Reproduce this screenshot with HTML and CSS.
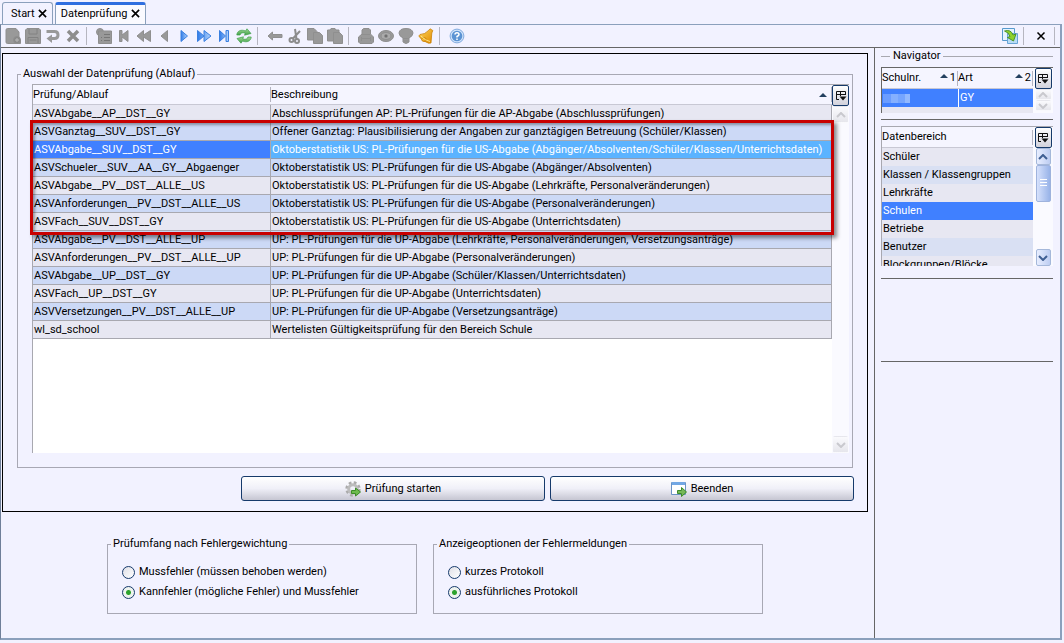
FILE: index.html
```html
<!DOCTYPE html>
<html lang="de">
<head>
<meta charset="utf-8">
<title>Datenprüfung</title>
<link rel="stylesheet" href="styles.css">
</head>
<body>
<svg class="defs" aria-hidden="true">
  <defs>
    <linearGradient id="blue" x1="0" y1="0" x2="1" y2="0"><stop offset="0" stop-color="#2f7be8"/><stop offset="1" stop-color="#b4d4fc"/></linearGradient>
    <linearGradient id="gold" x1="0" y1="0" x2="1" y2="1"><stop offset="0" stop-color="#ffd65a"/><stop offset="1" stop-color="#e08a00"/></linearGradient>
    <linearGradient id="green" x1="0" y1="0" x2="0" y2="1"><stop offset="0" stop-color="#a4dc98"/><stop offset="1" stop-color="#3f9f45"/></linearGradient>
    <symbol id="columns" viewBox="0 0 12 12"><path d="M1.500 9.500V1.500H10.500V5M1.500 4.500H10.500M5.500 1.500V6M1.500 9.500H4" fill="none" stroke="#111"/><path d="M4.500 6.500H11.500L8 10.500Z" fill="#111"/></symbol>
    <symbol id="up" viewBox="0 0 10 6"><path d="M1 5L5 1L9 5" fill="none" stroke="currentColor" stroke-width="2"/></symbol>
    <symbol id="down" viewBox="0 0 10 6"><path d="M1 1L5 5L9 1" fill="none" stroke="currentColor" stroke-width="2"/></symbol>
    <symbol id="sort" viewBox="0 0 8 4"><path d="M0 4L4 0L8 4Z" fill="#23405f"/></symbol>
    <symbol id="close" viewBox="0 0 10 10"><path d="M1 1L9 9M9 1L1 9" stroke="#000" stroke-width="1.800"/></symbol>
  </defs>
</svg>
<div class="window">
  <nav class="tabs">
    <button class="tab">Start <svg class="x"><use href="#close"/></svg></button>
    <button class="tab active">Datenprüfung <svg class="x"><use href="#close"/></svg></button>
  </nav>
  <div class="frame">
    <div class="toolbar">
      <button class="tool" aria-label="Neu"><svg viewBox="0 0 16 16" class="gray"><path d="M1 2Q1 .5 2.500 .5H11L14 4V11L15.500 12V15.500H2.500Q1 15.500 1 14Z"/><circle cx="12" cy="12" r="3.500" fill="#888"/><path d="M12 10V14M10 12H14" stroke="#b8b8b8"/></svg></button>
      <button class="tool" aria-label="Speichern"><svg viewBox="0 0 16 16" class="gray"><path d="M.5 2L2 .5H14L15.500 2V15.500H.5Z"/><path d="M4 1V6H12V1M3 15V9.500H13V15M4.500 12H11.500" fill="none" stroke="#828282"/></svg></button>
      <button class="tool" aria-label="Rückgängig"><svg viewBox="0 0 16 16"><path d="M1.500 3.500H9.500Q13 3.500 13 7Q13 10.500 9.500 10.500H6" fill="none" stroke="#999" stroke-width="3"/><path d="M7 6.500V15L1.500 10.500Z" fill="#999"/></svg></button>
      <button class="tool" aria-label="Löschen"><svg viewBox="0 0 16 16"><path d="M3 3L13 13M13 3L3 13" stroke="#8d8d8d" stroke-width="3.500"/></svg></button>
      <i class="sep"></i>
      <button class="tool" aria-label="Tabelle"><svg viewBox="0 0 16 16" class="gray"><circle cx="4" cy="4" r="3.500"/><path d="M2.500 3H15.500V15.500H2.500Z"/><path d="M8 6.500H14M8 9.500H14M8 12.500H14M5 9.500H6M5 12.500H6" stroke="#777"/></svg></button>
      <button class="tool" aria-label="Erster"><svg viewBox="0 0 16 16" class="gray"><path d="M3.500 2.500H6V7L12 2.500V13.500L6 9V13.500H3.500Z"/></svg></button>
      <button class="tool" aria-label="Schnell zurück"><svg viewBox="0 0 16 16" class="gray"><path d="M7.500 2.500V7L14.500 2.500V13.500L7.500 9V13.500L1 8Z"/></svg></button>
      <button class="tool" aria-label="Zurück"><svg viewBox="0 0 16 16" class="gray"><path d="M11.500 2.500V13.500L5 8Z"/></svg></button>
      <button class="tool" aria-label="Vor"><svg viewBox="0 0 16 16" class="blue"><path d="M5 2.500V13.500L11.500 8Z"/></svg></button>
      <button class="tool" aria-label="Schnell vor"><svg viewBox="0 0 16 16" class="blue"><path d="M1.500 2.500V13.500L8 8ZM8 2.500V13.500L15 8Z"/></svg></button>
      <button class="tool" aria-label="Letzter"><svg viewBox="0 0 16 16" class="blue"><path d="M3.500 2.500V13.500L9.500 8ZM10 2.500H12.500V13.500H10Z"/></svg></button>
      <button class="tool" aria-label="Aktualisieren"><svg viewBox="0 0 16 16" fill="url(#green)" stroke="#3d9e49" stroke-width=".7"><path d="M.8 7C1 3 5 1 9.500 3L11 .8L15 5.500L8.500 7.200L9.300 5.200Q5 3.700 4 7Z"/><path d="M15.200 9C15 13 11 15 6.500 13L5 15.200L1 10.500L7.500 8.800L6.700 10.800Q11 12.300 12 9Z"/></svg></button>
      <i class="sep"></i>
      <button class="tool" aria-label="Zurück navigieren"><svg viewBox="0 0 16 16" class="gray"><path d="M5.500 4V6.500H15V9.500H5.500V12L1 8Z"/></svg></button>
      <button class="tool" aria-label="Ausschneiden"><svg viewBox="0 0 16 16" fill="none" stroke="#8c8c8c" stroke-width="2"><path d="M8 1L9.500 11M13 3L5.500 11"/><circle cx="4.500" cy="12" r="2"/><circle cx="10" cy="13" r="2"/></svg></button>
      <button class="tool" aria-label="Kopieren"><svg viewBox="0 0 16 16" class="gray"><path d="M.5 .5H7L10 3.500V12H.5Z"/><path d="M6.500 4.500H12.500L15.500 7.500V15.500H6.500Z"/></svg></button>
      <button class="tool" aria-label="Einfügen"><svg viewBox="0 0 16 16" class="gray"><path d="M.5 2H3L4 .5H8L9 2H12V13H.5Z"/><path d="M6.500 4.500H12.500L15.500 7.500V15.500H6.500Z"/></svg></button>
      <i class="sep"></i>
      <button class="tool" aria-label="Drucken"><svg viewBox="0 0 16 16" class="gray"><path d="M4 6V2L5.500 .5H11L12.500 2V6L15.500 9V14L14 15.500H2L.5 14V9Z"/><path d="M4 6.500H12M3.500 10.500H12.500M3.500 9V13M12.500 9V13"/></svg></button>
      <button class="tool" aria-label="Vorschau"><svg viewBox="0 0 16 16" class="gray"><ellipse cx="8" cy="8" rx="7.500" ry="5.500"/><ellipse cx="8" cy="8" rx="5" ry="3.500" fill="#aaa"/><circle cx="8" cy="8" r="1.500" fill="#666"/></svg></button>
      <button class="tool" aria-label="Hinweis"><svg viewBox="0 0 16 16" class="gray"><path d="M5 10Q1 8 1 5Q1.500 .5 8 .5T15 5Q15 8 11 10V14Q8 17 5 14Z"/><path d="M5 10.500H11M5.500 13H10.500"/></svg></button>
      <button class="tool" aria-label="Meldungen"><svg viewBox="0 0 16 16" fill="url(#gold)" stroke="#c98208" stroke-width=".8"><path d="M12 .8L14.800 2.500L13.800 5L13 15L10.500 15.200Q3 12.500 .8 8L2 6.500Q7 6.500 10.500 2.500Z"/><ellipse cx="6" cy="11.500" rx="2.300" ry="2"/><path d="M3 8Q7 12.500 12 13.500" fill="none" stroke="#fff0a0"/></svg></button>
      <i class="sep"></i>
      <button class="tool" aria-label="Hilfe"><svg viewBox="0 0 16 16"><circle cx="8" cy="8" r="6.900" fill="#cfe3fa" stroke="#83abdf"/><circle cx="8" cy="8" r="5.300" fill="#5b93d3"/><path d="M6 6.500Q6 4.700 8 4.700T10 6.500Q10 7.500 8 8.500V9.500M8 10.500V12" fill="none" stroke="#fff" stroke-width="1.500"/></svg></button>
      <span class="grow"></span>
      <button class="tool" aria-label="Ablösen"><svg viewBox="0 0 16 16"><path d="M.5 .5H12.500V12.500H.5Z" fill="#e5f3ff" stroke="#579acd"/><path d="M5.500 5.500H15.500V15.500H5.500Z" fill="#b9dcf5" stroke="#68a4d6"/><path d="M2.500 3Q9 1 11 7L14 6L11.500 13L5.500 9.500L8 8.500Q7 4.500 2.500 3Z" fill="#8fd12c" stroke="#3e8c1d" stroke-width=".9"/></svg></button>
      <i class="sep"></i>
      <button class="tool" aria-label="Schließen"><svg viewBox="0 0 16 16"><path d="M4.500 4.500L11.500 11.500M11.500 4.500L4.500 11.500" stroke="#000" stroke-width="1.500"/></svg></button>
      <i class="sep last"></i>
    </div>
    <div class="body">
      <main class="main">
        <section class="check">
          <fieldset class="group">
            <legend>Auswahl der Datenprüfung (Ablauf)</legend>
            <div class="grid">
              <table class="list">
                <colgroup><col class="name"><col></colgroup>
                <thead><tr><th>Prüfung/Ablauf</th><th><div class="head"><span>Beschreibung</span><svg class="sort"><use href="#sort"/></svg></div></th></tr></thead>
                <tbody>
                  <tr><td>ASVAbgabe__AP__DST__GY</td><td>Abschlussprüfungen AP: PL-Prüfungen für die AP-Abgabe (Abschlussprüfungen)</td></tr>
                  <tr><td>ASVGanztag__SUV__DST__GY</td><td>Offener Ganztag: Plausibilisierung der Angaben zur ganztägigen Betreuung (Schüler/Klassen)</td></tr>
                  <tr class="selected"><td>ASVAbgabe__SUV__DST__GY</td><td>Oktoberstatistik US: PL-Prüfungen für die US-Abgabe (Abgänger/Absolventen/Schüler/Klassen/Unterrichtsdaten)</td></tr>
                  <tr><td>ASVSchueler__SUV__AA__GY__Abgaenger</td><td>Oktoberstatistik US: PL-Prüfungen für die US-Abgabe (Abgänger/Absolventen)</td></tr>
                  <tr><td>ASVAbgabe__PV__DST__ALLE__US</td><td>Oktoberstatistik US: PL-Prüfungen für die US-Abgabe (Lehrkräfte, Personalveränderungen)</td></tr>
                  <tr><td>ASVAnforderungen__PV__DST__ALLE__US</td><td>Oktoberstatistik US: PL-Prüfungen für die US-Abgabe (Personalveränderungen)</td></tr>
                  <tr><td>ASVFach__SUV__DST__GY</td><td>Oktoberstatistik US: PL-Prüfungen für die US-Abgabe (Unterrichtsdaten)</td></tr>
                  <tr><td>ASVAbgabe__PV__DST__ALLE__UP</td><td>UP: PL-Prüfungen für die UP-Abgabe (Lehrkräfte, Personalveränderungen, Versetzungsanträge)</td></tr>
                  <tr><td>ASVAnforderungen__PV__DST__ALLE__UP</td><td>UP: PL-Prüfungen für die UP-Abgabe (Personalveränderungen)</td></tr>
                  <tr><td>ASVAbgabe__UP__DST__GY</td><td>UP: PL-Prüfungen für die UP-Abgabe (Schüler/Klassen/Unterrichtsdaten)</td></tr>
                  <tr><td>ASVFach__UP__DST__GY</td><td>UP: PL-Prüfungen für die UP-Abgabe (Unterrichtsdaten)</td></tr>
                  <tr><td>ASVVersetzungen__PV__DST__ALLE__UP</td><td>UP: PL-Prüfungen für die UP-Abgabe (Versetzungsanträge)</td></tr>
                  <tr><td>wl_sd_school</td><td>Wertelisten Gültigkeitsprüfung für den Bereich Schule</td></tr>
                </tbody>
              </table>
              <div class="side">
                <button class="config" aria-label="Spalten"><svg><use href="#columns"/></svg></button>
                <button class="arrow off" aria-label="Nach oben"><svg><use href="#up"/></svg></button>
                <span class="grow"></span>
                <button class="arrow off" aria-label="Nach unten"><svg><use href="#down"/></svg></button>
              </div>
              <div class="marker"></div>
            </div>
          </fieldset>
          <div class="actions">
            <button class="action"><svg viewBox="0 0 16 16"><circle cx="8" cy="8" r="6.200" fill="none" stroke="#aaa" stroke-width="3" stroke-dasharray="2.600 2.270"/><circle cx="8" cy="8" r="4.300" fill="none" stroke="#bcbcbc" stroke-width="3"/><path d="M6.500 9.500H10.500V7L15.500 11L10.500 15V12.500H6.500Z" fill="#6dbb4e" stroke="#3c8b29"/></svg>Prüfung starten</button>
            <button class="action"><svg viewBox="0 0 16 16"><path d="M.5 1.500H14.500V13.500H.5Z" fill="#fff" stroke="#6b93c5"/><path d="M1 1H14V4H1Z" fill="#72a7e4"/><path d="M6.500 9.500H10.500V6.500L15.500 11L10.500 15.500V12.500H6.500Z" fill="#76b858" stroke="#3c8b29"/></svg>Beenden</button>
          </div>
        </section>
        <div class="options">
          <fieldset class="group scope">
            <legend>Prüfumfang nach Fehlergewichtung</legend>
            <label><input type="radio" name="scope">Mussfehler (müssen behoben werden)</label>
            <label><input type="radio" name="scope" checked>Kannfehler (mögliche Fehler) und Mussfehler</label>
          </fieldset>
          <fieldset class="group display">
            <legend>Anzeigeoptionen der Fehlermeldungen</legend>
            <label><input type="radio" name="log">kurzes Protokoll</label>
            <label><input type="radio" name="log" checked>ausführliches Protokoll</label>
          </fieldset>
        </div>
      </main>
      <aside class="navigator">
        <h2><span>Navigator</span></h2>
        <div class="grid schools">
          <table class="list plain">
            <colgroup><col class="number"><col></colgroup>
            <thead><tr><th><div class="head"><span>Schulnr.</span><span><svg class="sort"><use href="#sort"/></svg>1</span></div></th><th><div class="head"><span>Art</span><span><svg class="sort"><use href="#sort"/></svg>2</span></div></th></tr></thead>
            <tbody><tr class="selected"><td><span class="masked"></span></td><td>GY</td></tr></tbody>
          </table>
          <div class="side">
            <button class="config" aria-label="Spalten"><svg><use href="#columns"/></svg></button>
            <button class="arrow off short" aria-label="Nach oben"><svg><use href="#up"/></svg></button>
            <button class="arrow off short" aria-label="Nach unten"><svg><use href="#down"/></svg></button>
          </div>
        </div>
        <div class="areas">
          <div class="grid">
            <table class="list plain">
              <thead><tr><th>Datenbereich</th></tr></thead>
              <tbody>
                <tr><td>Schüler</td></tr>
                <tr><td>Klassen / Klassengruppen</td></tr>
                <tr><td>Lehrkräfte</td></tr>
                <tr class="selected"><td>Schulen</td></tr>
                <tr><td>Betriebe</td></tr>
                <tr><td>Benutzer</td></tr>
                <tr><td>Blockgruppen/Blöcke</td></tr>
              </tbody>
            </table>
            <div class="side">
              <button class="config" aria-label="Spalten"><svg><use href="#columns"/></svg></button>
              <button class="arrow" aria-label="Nach oben"><svg><use href="#up"/></svg></button>
              <div class="thumb"></div>
              <span class="grow"></span>
              <button class="arrow" aria-label="Nach unten"><svg><use href="#down"/></svg></button>
            </div>
          </div>
        </div>
        <div class="empty"></div>
      </aside>
    </div>
  </div>
</div>
</body>
</html>
```

FILE: styles.css
```css
* { box-sizing: border-box; }

body {
  margin: 0;
  background: #f2f2ff;
  color: #000;
  font: 11px/16px Roboto, "Open Sans", sans-serif;
}

button {
  padding: 0;
  border: 0;
  background: none;
  color: inherit;
  font: inherit;
}

svg { flex: none; }
.defs { position: absolute; width: 0; height: 0; }
.grow { flex: 1; }

.window {
  display: flex;
  flex-direction: column;
  min-height: 100vh;
  padding: 2px 2px 3px 0;
}

/* Tabs */
.tabs {
  display: flex;
  align-items: flex-end;
  gap: 2px;
  height: 22px;
  padding-left: 2px;
}

.tab {
  display: flex;
  align-items: center;
  gap: 3px;
  height: 22px;
  padding: 0 5px 0 8px;
  border: 1px solid #8ba0bc;
  border-bottom: 0;
  border-radius: 3px 3px 0 0;
}

.tab.active {
  padding: 0 5px 2px;
  border-top: 3px solid #2f6fe0;
  background: #fafaff;
}

.x { width: 9px; height: 9px; }

/* Frame and toolbar */
.frame {
  display: flex;
  flex: 1;
  flex-direction: column;
  border: 1px solid #8ba0bc;
  border-left-color: #6f7f99;
  border-right-width: 2px;
  border-bottom-width: 2px;
}

.toolbar {
  display: flex;
  align-items: center;
  height: 22px;
  padding-left: 2px;
}

.tool {
  display: flex;
  align-items: center;
  justify-content: center;
  width: 20px;
  height: 20px;
}

.tool svg { width: 16px; height: 16px; }
.gray { fill: #999; stroke: #8f8f8f; stroke-width: 1; }
.blue { fill: url(#blue); stroke: #3b80e0; stroke-width: 1; }

.sep {
  width: 1px;
  height: 18px;
  margin: 0 7px 0 3px;
  background: #b6b6c0;
}
.sep.last { margin-right: 5px; }

.body {
  display: flex;
  flex: 1;
  gap: 6px;
  border-top: 1px solid #666;
  padding-left: 1px;
}

/* Main area */
.main {
  flex: 1;
  min-width: 0;
  padding-top: 5px;
}

.check {
  padding: 12px 13px 10px 14px;
  border: 1px solid #000;
}

.group {
  min-width: 0;
  margin: 0;
  border: 1px solid #a8a8b4;
}

.group legend { margin-left: -11px; padding: 0 2px; }
.check .group { margin-right: 1px; padding: 2px 3px 14px 14px; }

.grid {
  display: flex;
  position: relative;
  align-items: flex-start;
  border-top: 1px solid #a8a8b0;
  border-left: 1px solid #a8a8b0;
  background: #fff;
}

.check .grid { min-height: 369px; align-items: stretch; }
.check .list { align-self: flex-start; }

.list {
  flex: 1;
  width: 0;
  border-collapse: separate;
  border-spacing: 0;
  table-layout: fixed;
}

.name { width: 238px; }
.number { width: 76px; }

.list th, .list td {
  overflow: hidden;
  padding: 0 1px;
  font-weight: normal;
  text-align: left;
  white-space: nowrap;
}

.list th {
  height: 21px;
  padding: 0;
  border-bottom: 1px solid #c8c8d4;
  background: linear-gradient(#b4b4c0, #b4b4c0) right center / 1px 15px no-repeat #f5f5ff;
}
.check .list th { height: 20px; }

.list td {
  height: 18px;
  border-right: 1px solid #a8a8b0;
  border-bottom: 1px solid #a8a8b0;
  background: #e7e7f2;
  line-height: 16px;
}

.list tr:nth-child(even) td { background: #ccd9f6; }
.list .selected td { background: #4080ff; color: #fff; }
.list:not(.plain) .selected td + td { background: #5bb3ff; border-color: #8d9cb4; }
.plain td { border: 0; }
.list.plain tr:nth-child(even) td { background: #d9e0f3; }
.list.plain .selected:nth-child(n) td { background: #4080ff; }
.plain td + td { border-left: 1px solid #fff; }

.head {
  display: flex;
  align-items: center;
  justify-content: space-between;
}
.sort { width: 8px; height: 4px; margin-right: 2px; vertical-align: 3px; }
.head > .sort { margin-right: 5px; }
.plain .head { padding-right: 2px; }

.side {
  display: flex;
  flex-direction: column;
  align-items: center;
  width: 17px;
  background: #fafaff;
}

.config {
  display: flex;
  align-items: center;
  justify-content: center;
  width: 17px;
  height: 21px;
  flex: none;
  border: 1px solid #163a6b;
  border-radius: 2px;
  background: linear-gradient(#fff, #d2d2dc);
}
.config svg { width: 12px; height: 12px; }

.arrow {
  display: flex;
  align-items: center;
  justify-content: center;
  width: 15px;
  height: 17px;
  flex: none;
  border: 1px solid #a5b8da;
  border-radius: 2px;
  background: linear-gradient(90deg, #e8eeff, #bdcdf2);
  color: #3f5f93;
}
.arrow svg { width: 10px; height: 6px; }
.arrow.off { border-color: transparent; background: linear-gradient(#fafafd, #e6e6ec); color: #c9c9ce; }
.arrow.short { height: 11px; }

.thumb {
  width: 15px;
  height: 37px;
  border: 1px solid #9fb3dd;
  border-radius: 2px;
  background:
    repeating-linear-gradient(#fff 0 1px, transparent 1px 3px) center / 7px 9px no-repeat,
    linear-gradient(90deg, #d6e1fc, #98b3e8);
}

/* Highlight drawn over a range of rows */
.marker {
  position: absolute;
  top: 35px;
  right: 15px;
  left: -3px;
  height: 115px;
  border: 3px solid #c80000;
  box-shadow: 3px 3px 4px rgba(0, 0, 0, .45), inset 2px 2px 3px rgba(0, 0, 0, .35);
  pointer-events: none;
}

.actions {
  display: grid;
  grid-template-columns: 304px 304px;
  justify-content: end;
  gap: 5px;
  margin-top: 8px;
}

.action {
  display: flex;
  align-items: center;
  justify-content: center;
  gap: 4px;
  height: 25px;
  border: 1px solid #163a6b;
  border-radius: 3px;
  background: linear-gradient(#fff, #f0f0f8 50%, #c6c6d2);
}
.action svg { width: 16px; height: 16px; }

.options {
  display: flex;
  gap: 16px;
  margin-top: 24px;
  padding-left: 105px;
}

.options .group { padding: 10px 14px 11px; }
.scope { width: 310px; }
.display { width: 330px; }

.options label {
  display: flex;
  align-items: center;
  gap: 4px;
  height: 20px;
}

input[type="radio"] {
  appearance: none;
  width: 13px;
  height: 13px;
  margin: 0;
  border: 1px solid #163a6b;
  border-radius: 50%;
  background: linear-gradient(135deg, #dfdfe6, #fff);
}
input[type="radio"]:checked { background: radial-gradient(circle, #2da32d 0 2px, #eef3ee 3px); }

/* Navigator */
.navigator {
  width: 186px;
  padding: 0 7px 0 6px;
  border-left: 1px solid #666;
}

.navigator h2 {
  display: flex;
  align-items: center;
  gap: 3px;
  margin: 0;
  font: inherit;
}
.navigator h2::before, .navigator h2::after { content: ""; height: 1px; background: #a8a8b0; }
.navigator h2::before { width: 9px; }
.navigator h2::after { flex: 1; }

.navigator .side { width: 20px; }
.schools { height: 46px; margin-top: 3px; border-color: #666; background: #e7e7f2; }
.schools .side { align-self: stretch; }

.areas {
  margin-top: 6px;
  padding: 6px 0 12px;
  border-top: 1px solid #666;
  border-bottom: 1px solid #666;
}
.areas .grid { height: 140px; overflow: hidden; }
.areas .side { height: 139px; }
.empty { height: 83px; border-bottom: 1px solid #666; }

.masked {
  display: block;
  width: 27px;
  height: 9px;
  background: linear-gradient(90deg, #6b9dff 0 30%, #85b0ff 30% 55%, #75a5ff 55% 80%, #92b9ff 80%);
}
```
